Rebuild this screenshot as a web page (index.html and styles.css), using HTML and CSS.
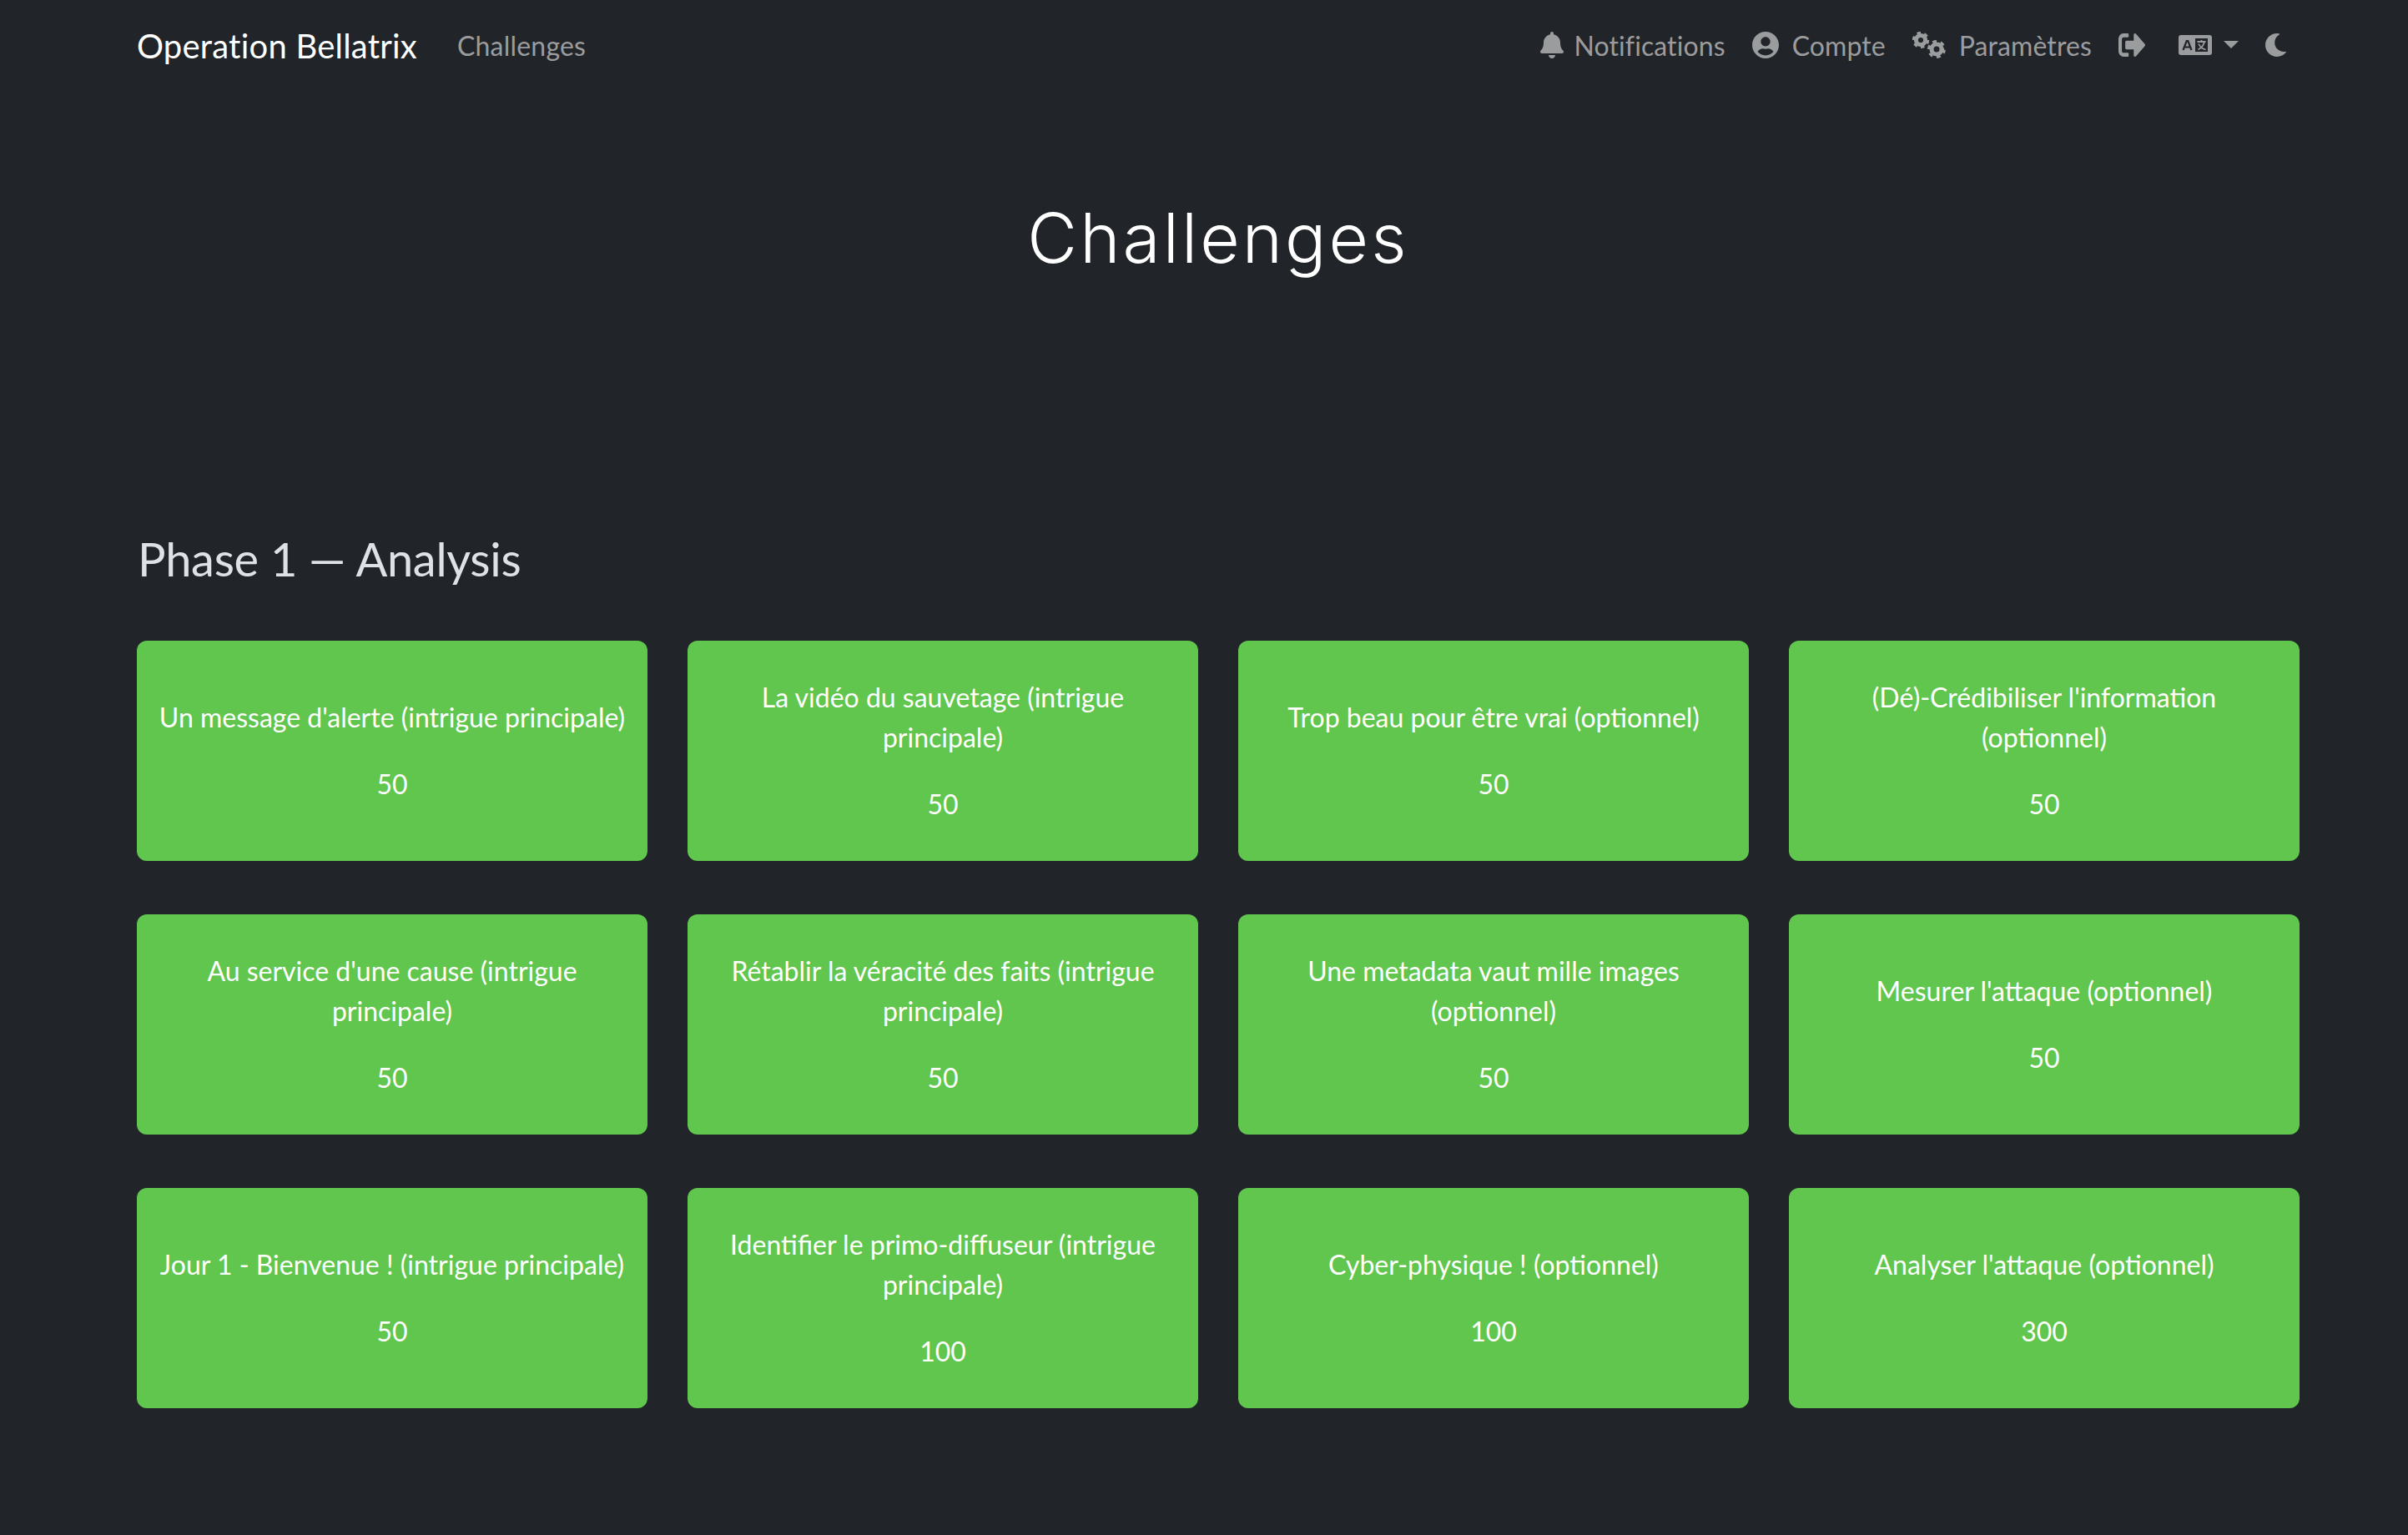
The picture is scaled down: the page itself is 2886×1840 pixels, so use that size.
FILE: index.html
```html
<!DOCTYPE html>
<html lang="fr">
<head>
<meta charset="utf-8">
<title>Challenges</title>
<link rel="stylesheet" href="styles.css">
</head>
<body>
<nav class="navbar">
  <div class="nav-left">
    <a class="brand">Operation Bellatrix</a>
    <a class="nav-link nav-main">Challenges</a>
  </div>
  <div class="nav-right">
    <a class="nav-link"><svg class="icon bell" viewBox="0 0 448 512"><path d="M224 512c35.32 0 63.97-28.65 63.97-64H160.03c0 35.35 28.65 64 63.97 64zm215.39-149.71c-19.32-20.76-55.47-51.99-55.47-154.29 0-77.7-54.48-139.9-127.94-155.16V32c0-17.67-14.32-32-31.98-32s-31.98 14.33-31.98 32v20.84C118.56 68.1 64.08 130.3 64.08 208c0 102.3-36.15 133.53-55.47 154.29-6 6.45-8.66 14.16-8.61 21.71.11 16.4 12.98 32 32.1 32h383.8c19.12 0 32-15.6 32.1-32 .05-7.55-2.61-15.27-8.61-21.71z"/></svg>Notifications</a>
    <a class="nav-link"><svg class="icon user" viewBox="0 8 496 496"><path d="M248 8C111 8 0 119 0 256s111 248 248 248 248-111 248-248S385 8 248 8zm0 96c48.6 0 88 39.4 88 88s-39.4 88-88 88-88-39.4-88-88 39.4-88 88-88zm0 344c-58.7 0-111.3-26.6-146.5-68.2 18.8-35.4 55.6-59.8 98.5-59.8 2.4 0 4.8.4 7.1 1.1 13 4.2 26.6 6.9 40.9 6.9 14.3 0 28-2.7 40.9-6.9 2.3-.7 4.7-1.1 7.1-1.1 42.9 0 79.7 24.4 98.5 59.8C359.3 421.4 306.7 448 248 448z"/></svg>Compte</a>
    <a class="nav-link"><svg class="icon cogs" viewBox="0 0 40 32"><g class="gear gear-a"><circle class="gear-ring" cx="10" cy="10" r="5.6"/><circle class="gear-teeth" cx="10" cy="10" r="8.5" pathLength="60"/></g><g class="gear gear-b"><circle class="gear-ring" cx="29" cy="21" r="6"/><circle class="gear-teeth" cx="29" cy="21" r="9.3" pathLength="60"/></g></svg>Paramètres</a>
    <a class="nav-link"><svg class="icon out" viewBox="0 64 504 384" preserveAspectRatio="none"><path d="M497 273L329 441c-15 15-41 4.5-41-17v-96H152c-13.3 0-24-10.7-24-24v-96c0-13.3 10.7-24 24-24h136V88c0-21.4 25.9-32 41-17l168 168c9.3 9.4 9.3 24.6 0 34zM192 436v-40c0-6.6-5.4-12-12-12H96c-17.7 0-32-14.3-32-32V160c0-17.7 14.3-32 32-32h84c6.6 0 12-5.4 12-12V76c0-6.6-5.4-12-12-12H96c-53 0-96 43-96 96v192c0 53 43 96 96 96h84c6.6 0 12-5.4 12-12z"/></svg></a>
    <a class="nav-link lang-link"><svg class="icon lang" viewBox="0 0 40 24"><rect width="40" height="24" rx="3"/><rect class="cut" x="20" y="4" width="15" height="16"/><path class="cut-line" d="M5.5 18 9.7 7h1.6l4.2 11M7.5 14.5h6"/><path class="glyph-line" d="M22.5 8h10M27.5 6v2M31 8c-1 4.5-3.6 7.5-7.5 9.5M24 10.5c1.6 3.5 4.6 6 8.5 7"/></svg><span class="caret"></span></a>
    <a class="nav-link"><svg class="icon moon" viewBox="27 0 459 512"><path d="M283.211 512c78.962 0 151.079-35.925 198.857-94.792 7.068-8.708-.639-21.43-11.562-19.35-124.203 23.654-238.262-71.576-238.262-196.954 0-72.222 38.662-138.635 101.498-174.394 9.686-5.512 7.25-20.197-3.756-22.23A258.156 258.156 0 0 0 283.211 0c-141.309 0-256 114.511-256 256 0 141.309 114.511 256 256 256z"/></svg></a>
  </div>
</nav>
<header class="hero"><h1>Challenges</h1></header>
<main class="container">
  <h3 class="phase">Phase 1 — Analysis</h3>
  <div class="grid">
    <button class="card">Un message d'alerte (intrigue principale)<span class="pts">50</span></button>
    <button class="card">La vidéo du sauvetage (intrigue principale)<span class="pts">50</span></button>
    <button class="card">Trop beau pour être vrai (optionnel)<span class="pts">50</span></button>
    <button class="card">(Dé)-Crédibiliser l'information (optionnel)<span class="pts">50</span></button>
    <button class="card">Au service d'une cause (intrigue principale)<span class="pts">50</span></button>
    <button class="card">Rétablir la véracité des faits (intrigue principale)<span class="pts">50</span></button>
    <button class="card">Une metadata vaut mille images (optionnel)<span class="pts">50</span></button>
    <button class="card">Mesurer l'attaque (optionnel)<span class="pts">50</span></button>
    <button class="card">Jour 1 - Bienvenue ! (intrigue principale)<span class="pts">50</span></button>
    <button class="card">Identifier le primo-diffuseur (intrigue principale)<span class="pts">100</span></button>
    <button class="card">Cyber-physique ! (optionnel)<span class="pts">100</span></button>
    <button class="card">Analyser l'attaque (optionnel)<span class="pts">300</span></button>
  </div>
</main>
</body>
</html>
```
FILE: styles.css
```css
* { box-sizing: border-box; }
html, body { margin: 0; padding: 0; }
body {
  min-height: 1840px;
  padding-left: 34px;
  background: #212529;
  color: #dee2e6;
  font-family: "Lato", sans-serif;
  font-size: 32px;
  line-height: 48px;
}
.navbar {
  height: 110px;
  width: 2592px;
  margin: 0 auto;
  display: flex;
  align-items: center;
  justify-content: space-between;
}
.nav-left, .nav-right, .nav-link { display: flex; align-items: center; }
.brand { color: #fff; font-size: 40px; margin-right: 48px; letter-spacing: .22px; }
.nav-link { color: #9b9c9e; font-size: 32px; letter-spacing: .1px; }
.nav-main { letter-spacing: .2px; }
.nav-right { gap: 32px; margin-right: 16px; }
.icon { fill: currentColor; display: block; margin-right: 16px; margin-bottom: 2px; }
.bell { width: 28px; height: 32px; margin-right: 13px; }
.user { width: 32px; height: 32px; }
.cogs { width: 40px; height: 32px; }
.out { width: 32px; height: 28px; margin-right: 0; }
.lang { width: 40px; height: 24px; margin-right: 0; }
.moon { width: 25px; height: 28px; margin-right: 0; }
.lang-link { margin-left: 8px; }
.cut { fill: #212529; }
.cut-line { fill: none; stroke: #212529; stroke-width: 2.2; }
.glyph-line { fill: none; stroke: #9b9c9e; stroke-width: 1.8; }
.gear circle { fill: none; stroke: currentColor; }
.gear-ring { stroke-width: 5; }
.gear-teeth { stroke-width: 3.4; stroke-dasharray: 5 5; }
.caret { width: 0; height: 0; margin-left: 14px; margin-bottom: 3px; border-top: 9px solid currentColor; border-left: 9px solid transparent; border-right: 9px solid transparent; }
.hero { height: 526px; padding-top: 116px; text-align: center; }
h1 { margin: 0; font-family: "Inter", sans-serif; font-weight: 300; font-size: 82px; line-height: 120px; color: #fff; letter-spacing: 3.1px; }
.container { width: 2592px; margin: 0 auto; }
.phase { margin: 0 0 64px; font-size: 56px; line-height: 68px; font-weight: 400; color: #dee2e6; padding-left: 1px; letter-spacing: -.3px; }
.grid { display: grid; grid-template-columns: repeat(4, 612px); column-gap: 48px; row-gap: 64px; }
.card {
  height: 264px;
  background: #61c64d;
  border: 0;
  border-radius: 12px;
  color: #fff;
  font: inherit;
  padding: 0 24px;
  text-align: center;
}
.pts { display: block; margin-top: 32px; }
```
